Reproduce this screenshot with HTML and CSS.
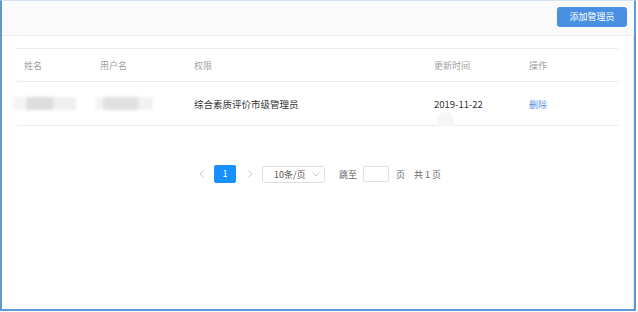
FILE: index.html
```html
<!DOCTYPE html>
<html lang="zh">
<head>
    <meta charset="UTF-8">
    <title>管理员列表</title>
    <link rel="stylesheet" href="styles.css">
</head>
<body>
    <div class="frame">
        <div class="topbar">
            <button class="btn-add">添加管理员</button>
        </div>

        <div class="content">
            <div class="table">
                <div class="row head">
                    <div class="cell">姓名</div>
                    <div class="cell">用户名</div>
                    <div class="cell">权限</div>
                    <div class="cell">更新时间</div>
                    <div class="cell">操作</div>
                </div>
                <div class="row body">
                    <div class="cell"><span class="mask mask-name"></span></div>
                    <div class="cell"><span class="mask mask-user"></span></div>
                    <div class="cell">综合素质评价市级管理员</div>
                    <div class="cell date">2019-11-22<span class="ghost"></span></div>
                    <div class="cell"><a class="link" href="#">删除</a></div>
                </div>
            </div>

            <div class="pager">
                <svg class="arrow prev" width="5" height="8" viewBox="0 0 5 8"><path d="M4.5 0.5 L1 4 L4.5 7.5" fill="none" stroke="#c8c8c8" stroke-width="1"/></svg>
                <span class="page active">1</span>
                <svg class="arrow next" width="5" height="8" viewBox="0 0 5 8"><path d="M0.5 0.5 L4 4 L0.5 7.5" fill="none" stroke="#c8c8c8" stroke-width="1"/></svg>
                <div class="size">
                    <span>10条/页</span>
                    <svg class="chev" width="8" height="5" viewBox="0 0 8 5"><path d="M0.5 0.5 L4 4 L7.5 0.5" fill="none" stroke="#c8c8c8" stroke-width="1"/></svg>
                </div>
                <span class="label jump-label">跳至</span>
                <input class="jump" type="text">
                <span class="label page-label">页</span>
                <span class="label total">共 1 页</span>
            </div>
        </div>
    </div>
</body>
</html>
```

FILE: styles.css
```css
* {
    margin: 0;
    padding: 0;
    box-sizing: border-box;
}

body {
    font-family: "Noto Sans CJK SC", "Noto Sans", sans-serif;
    background: #fff;
    color: #333;
}

.frame {
    width: 636px;
    height: 311px;
    border-left: 2px solid #5b9bd5;
    border-right: 2px solid #5b9bd5;
    border-bottom: 2px solid #5b9bd5;
    border-top: 1px solid #d6e3f0;
    box-shadow: inset -1px 0 0 #e4e4e4;
    background: #fff;
}

.topbar {
    height: 35px;
    background: #fafafa;
    border-bottom: 1px solid #ececec;
    display: flex;
    justify-content: flex-end;
    align-items: flex-start;
    padding: 6px 7px 0 0;
}

.btn-add {
    width: 70px;
    height: 20px;
    border: none;
    border-radius: 3px;
    background: #4a90e2;
    color: #fff;
    font-family: inherit;
    font-size: 9px;
    line-height: 20px;
}

.content {
    padding: 12px 16px 0 15px;
}

.table {
    border-top: 1px solid #ececec;
}

.row {
    display: grid;
    grid-template-columns: 76px 94px 240px 95px 1fr;
    align-items: center;
    border-bottom: 1px solid #ececec;
}

.row.head {
    height: 33px;
    color: #a0a0a0;
    font-size: 9px;
}

.row.body {
    height: 44px;
    font-size: 9.5px;
    color: #333;
}

.cell {
    padding-left: 7px;
    white-space: nowrap;
}

.date {
    position: relative;
}

.ghost {
    position: absolute;
    left: 10px;
    top: 15px;
    width: 17px;
    height: 14px;
    border-radius: 9px 9px 0 0;
    background: #f6f6f6;
}

.mask {
    display: block;
    height: 13px;
    filter: blur(1.5px);
}

.mask-name {
    width: 62px;
    margin-left: -10px;
    background: linear-gradient(90deg, #f4f4f4 0%, #f4f4f4 18%, #dedede 22%, #dcdcdc 60%, #f0f0f0 66%, #f0f0f0 100%);
}

.mask-user {
    width: 58px;
    margin-left: -5px;
    background: linear-gradient(90deg, #f4f4f4 0%, #f4f4f4 12%, #e0e0e0 16%, #e0e0e0 72%, #f2f2f2 78%, #f2f2f2 100%);
}

.link {
    color: #5b8ee6;
    text-decoration: none;
    font-size: 9px;
}

.pager {
    display: flex;
    justify-content: center;
    align-items: center;
    margin: 39px 0 0 5px;
    font-size: 9px;
    color: #666;
}

.arrow.prev {
    margin-right: 10px;
}

.arrow.next {
    margin-left: 12px;
}

.page {
    width: 22px;
    height: 18px;
    line-height: 18px;
    text-align: center;
    border-radius: 2px;
}

.page.active {
    background: #1890ff;
    color: #fff;
}

.size {
    width: 63px;
    height: 17px;
    margin-left: 9px;
    border: 1px solid #dedede;
    border-radius: 3px;
    display: flex;
    align-items: center;
    justify-content: space-between;
    padding: 0 4px 0 11px;
    color: #555;
}

.jump-label {
    margin-left: 14px;
}

.jump {
    width: 26px;
    height: 16px;
    margin-left: 6px;
    border: 1px solid #e0e0e0;
    border-radius: 2px;
    outline: none;
}

.page-label {
    margin-left: 7px;
}

.total {
    margin-left: 9px;
}
```
